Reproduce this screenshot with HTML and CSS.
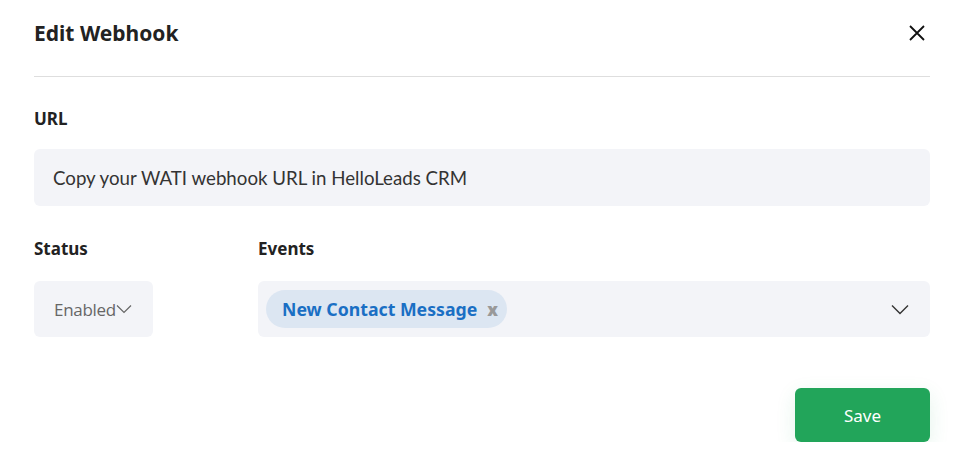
FILE: index.html
```html
<!DOCTYPE html>
<html lang="en">
<head>
  <meta charset="UTF-8">
  <title>Edit Webhook</title>
  <link rel="stylesheet" href="styles.css">
</head>
<body>
  <div class="modal">
    <div class="modal-header">
      <h1>Edit Webhook</h1>
      <button class="close-btn" aria-label="Close">
        <svg width="18" height="18" viewBox="0 0 18 18"><path d="M2 2L16 16M16 2L2 16" stroke="#111" stroke-width="1.8" fill="none"/></svg>
      </button>
    </div>

    <div class="field url">
      <label>URL</label>
      <div class="input">Copy your WATI webhook URL in HelloLeads CRM</div>
    </div>

    <div class="row">
      <div class="field status">
        <label>Status</label>
        <div class="select small">
          <span>Enabled</span>
          <svg width="16" height="10" viewBox="0 0 16 10"><path d="M1 1.5L8 8.5L15 1.5" stroke="#666" stroke-width="1.2" fill="none"/></svg>
        </div>
      </div>
      <div class="field events">
        <label>Events</label>
        <div class="select wide">
          <span class="chip">New Contact Message <b>x</b></span>
          <svg class="chev" width="18" height="11" viewBox="0 0 18 11"><path d="M1 1.5L9 9.5L17 1.5" stroke="#333" stroke-width="1.4" fill="none"/></svg>
        </div>
      </div>
    </div>

    <div class="footer">
      <button class="save">Save</button>
    </div>
  </div>
</body>
</html>
```

FILE: styles.css
```css
body {
  margin: 0;
  background: #fff;
  font-family: "Noto Sans", "Open Sans", sans-serif;
  color: #222;
}

.modal {
  padding: 0 31px 0 34px;
}

.modal-header {
  display: flex;
  align-items: center;
  justify-content: space-between;
  height: 76px;
  border-bottom: 1px solid #dedede;
}

.modal-header h1 {
  margin: 0 0 10px;
  font-size: 21px;
  font-weight: 700;
  color: #222;
}

.close-btn {
  background: none;
  border: none;
  padding: 0;
  margin: 0 4px 10px 0;
  cursor: pointer;
  display: flex;
}

.field label {
  display: block;
  font-size: 17px;
  font-weight: 700;
  color: #222;
}

.url {
  margin-top: 30px;
}

.url label {
  margin-bottom: 19px;
}

.input {
  height: 57px;
  display: flex;
  align-items: center;
  padding: 0 19px;
  background: #f3f4f8;
  border-radius: 6px;
  font-family: Lato, sans-serif;
  font-size: 18.7px;
  color: #333;
}

.row {
  display: flex;
  gap: 105px;
  margin-top: 31px;
}

.row label {
  margin-bottom: 21px;
}

.events {
  flex: 1;
}

.select {
  height: 56px;
  display: flex;
  align-items: center;
  background: #f3f4f8;
  border-radius: 6px;
  box-sizing: border-box;
}

.select.small {
  width: 119px;
  padding-left: 20px;
  font-size: 17px;
  color: #666;
}

.select.small span {
  font-family: "Open Sans", sans-serif;
  font-weight: 400;
  letter-spacing: -0.3px;
}

.select.wide {
  padding: 0 21px 0 8px;
  justify-content: space-between;
}

.chip {
  display: inline-flex;
  align-items: center;
  height: 38px;
  padding: 0 9px 0 16px;
  border-radius: 19px;
  background: #dce6f2;
  color: #1a6fc4;
  font-size: 17.7px;
  font-weight: 700;
}

.chip b {
  margin-left: 10px;
  color: #999;
  font-size: 17px;
}

.footer {
  display: flex;
  justify-content: flex-end;
  margin-top: 51px;
}

.save {
  width: 135px;
  height: 54px;
  background: #22a55a;
  border: none;
  border-radius: 6px;
  color: #fff;
  font-family: "Noto Sans", sans-serif;
  font-size: 17px;
  box-shadow: 0 6px 20px rgba(34, 165, 90, 0.12);
  cursor: pointer;
}
```
